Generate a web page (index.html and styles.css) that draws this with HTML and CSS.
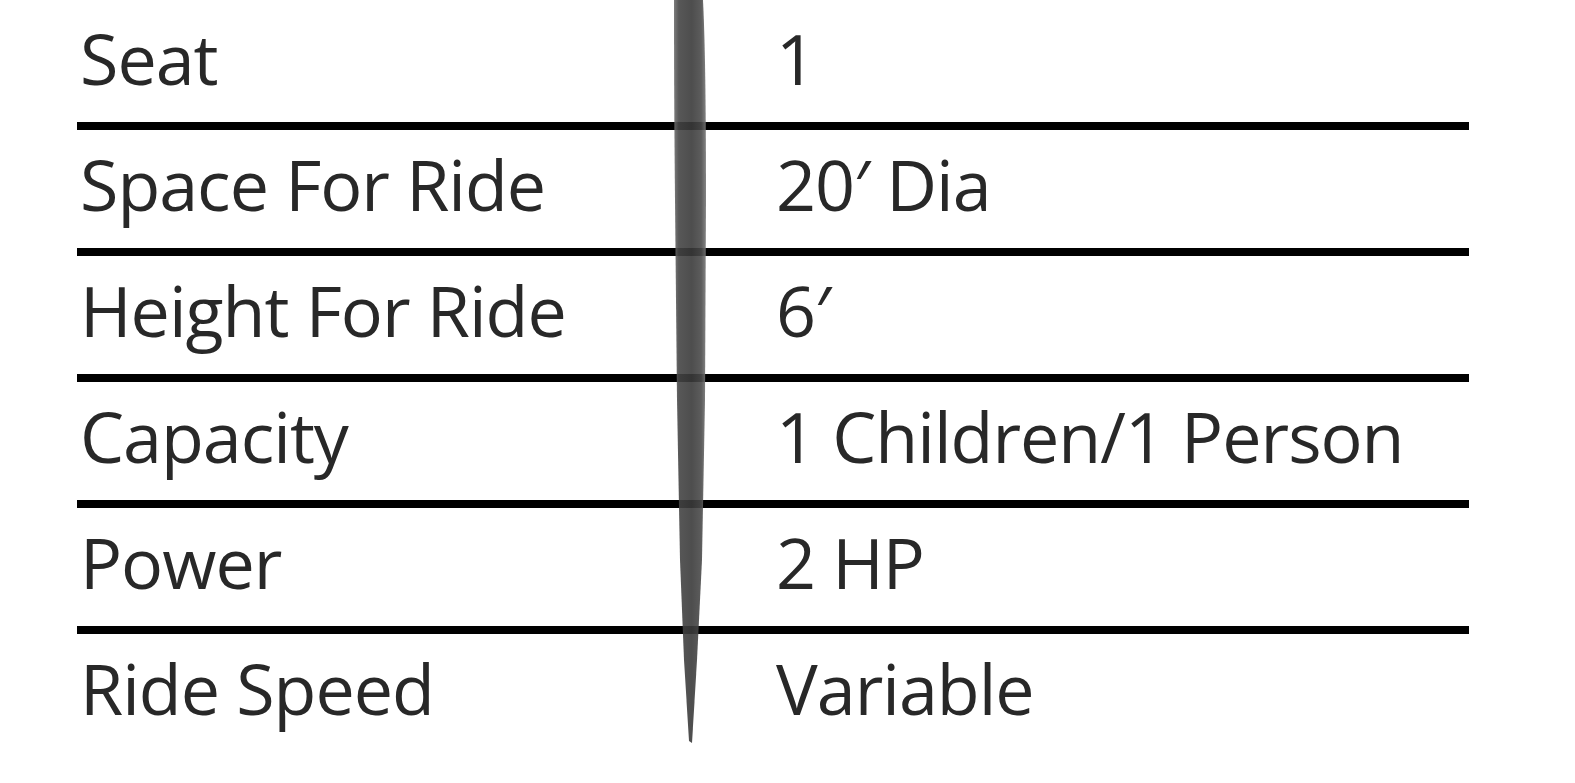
FILE: index.html
```html
<!DOCTYPE html>
<html lang="en">
<head>
<meta charset="utf-8">
<title>Specifications</title>
<link rel="stylesheet" href="styles.css">
</head>
<body>
<div class="sheet">
  <div class="spec">
    <div class="row"><div class="label">Seat</div><div class="value">1</div></div>
    <div class="row"><div class="label">Space For Ride</div><div class="value">20′ Dia</div></div>
    <div class="row"><div class="label">Height For Ride</div><div class="value">6′</div></div>
    <div class="row"><div class="label">Capacity</div><div class="value">1 Children/1 Person</div></div>
    <div class="row"><div class="label">Power</div><div class="value">2 HP</div></div>
    <div class="row"><div class="label">Ride Speed</div><div class="value">Variable</div></div>
  </div>
  <svg class="divider" viewBox="668 0 44 750" aria-hidden="true">
    <defs>
      <linearGradient id="brush" x1="0" y1="0" x2="1" y2="0">
        <stop offset="0" stop-color="#6e6e6e"/>
        <stop offset="0.15" stop-color="#454545"/>
        <stop offset="0.55" stop-color="#3a3a3a"/>
        <stop offset="0.85" stop-color="#4a4a4a"/>
        <stop offset="1" stop-color="#777"/>
      </linearGradient>
    </defs>
    <path d="M674,0 L703,0 C705,40 706,100 706,200 L705,400 L702,560 L697,660 L692,743 L689,741 L684,660 L680,560 L677,400 L675,200 C674,100 674,40 674,0 Z" fill="url(#brush)" opacity="0.9"/>
  </svg>
</div>
</body>
</html>
```
FILE: styles.css
```css
html, body {
  margin: 0;
  padding: 0;
  background: #ffffff;
}

body {
  font-family: "Open Sans", "Noto Sans", "DejaVu Sans", sans-serif;
  color: #282828;
}

.sheet {
  position: relative;
  width: 1575px;
  height: 783px;
  overflow: hidden;
}

.spec {
  margin-left: 77px;
  width: 1392px;
  padding-top: 4px;
}

.row {
  display: grid;
  grid-template-columns: 699px 1fr;
  box-sizing: border-box;
  height: 126px;
  padding-top: 19px;
  border-bottom: 8px solid #000;
}

.row:last-child {
  border-bottom: none;
}

.label,
.value {
  font-size: 70px;
  line-height: 70px;
  letter-spacing: -1px;
  white-space: nowrap;
}

.label {
  padding-left: 3px;
}

.divider {
  position: absolute;
  top: 0;
  left: 668px;
  width: 44px;
  height: 750px;
}
```
